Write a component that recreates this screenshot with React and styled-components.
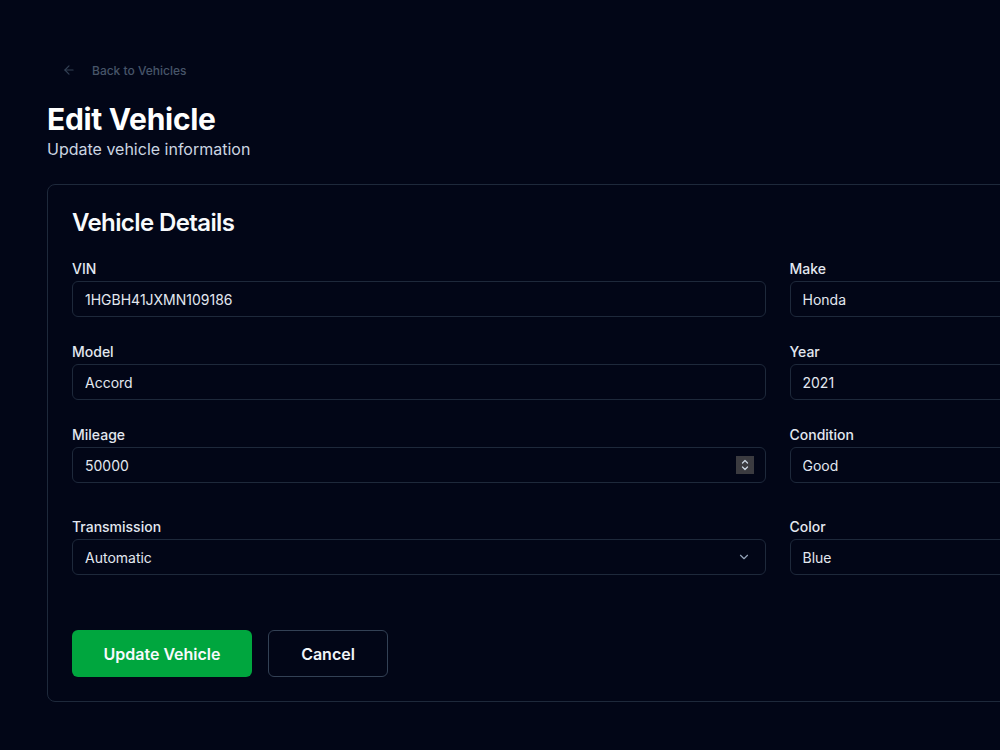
import React from 'react';
import styled, { createGlobalStyle } from "styled-components";

const GlobalStyle = createGlobalStyle`
  html, body {
    margin: 0;
    padding: 0;
    background: #020617;
    overflow: hidden;
  }
  body {
    font-family: Inter, "Noto Sans", sans-serif;
    color: #f8fafc;
  }
  * { box-sizing: border-box; }
`

const fields = [
  [{ label: "VIN", value: "1HGBH41JXMN109186" }, { label: "Make", value: "Honda" }],
  [{ label: "Model", value: "Accord" }, { label: "Year", value: "2021" }],
  [{ label: "Mileage", value: "50000", type: "number" }, { label: "Condition", value: "Good" }],
  [{ label: "Transmission", value: "Automatic", type: "select" }, { label: "Color", value: "Blue" }],
]

const Field = ({ label, value, type }) => (
  <FieldBox>
    <Label>{label}</Label>
    <InputWrap>
      {type === "select" ? (
        <Select defaultValue={value}>
          <option>Automatic</option>
          <option>Manual</option>
        </Select>
      ) : (
        <Input defaultValue={value} type={type === "number" ? "number" : "text"} />
      )}
      {type === "number" && (
        <Spinner>
          <svg width="10" height="14" viewBox="0 0 10 14" fill="none" stroke="#cbd5e1" strokeWidth="1.3" strokeLinecap="round" strokeLinejoin="round">
            <path d="M2.5 5 5 2.5 7.5 5" />
            <path d="M2.5 9 5 11.5 7.5 9" />
          </svg>
        </Spinner>
      )}
      {type === "select" && (
        <Chevron>
          <svg width="14" height="14" viewBox="0 0 24 24" fill="none" stroke="#94a3b8" strokeWidth="2" strokeLinecap="round" strokeLinejoin="round">
            <path d="m6 9 6 6 6-6" />
          </svg>
        </Chevron>
      )}
    </InputWrap>
  </FieldBox>
)

export default function App() {
  return (
    <>
      <GlobalStyle />
      <Page>
        <BackLink>
          <svg width="14" height="14" viewBox="0 0 24 24" fill="none" stroke="currentColor" strokeWidth="2" strokeLinecap="round" strokeLinejoin="round">
            <path d="m12 19-7-7 7-7" />
            <path d="M19 12H5" />
          </svg>
          <span>Back to Vehicles</span>
        </BackLink>
        <Title>Edit Vehicle</Title>
        <Subtitle>Update vehicle information</Subtitle>
        <Card>
          <CardTitle>Vehicle Details</CardTitle>
          <FormGrid>
            {fields.map((row, i) => (
              <Row key={i} $last={i === fields.length - 1}>
                {row.map((f) => (
                  <Field key={f.label} {...f} />
                ))}
              </Row>
            ))}
          </FormGrid>
          <Actions>
            <PrimaryButton>Update Vehicle</PrimaryButton>
            <OutlineButton>Cancel</OutlineButton>
          </Actions>
        </Card>
      </Page>
    </>
  )
}

const Page = styled.div`
  padding: 56px 47px 48px;
  width: 1560px;
`

const BackLink = styled.div`
  display: inline-flex;
  align-items: center;
  gap: 16px;
  height: 28px;
  padding: 0 12px 0 15px;
  margin-bottom: 17px;
  font-size: 12px;
  font-weight: 500;
  color: #475569;

  svg {
    color: #334155;
  }
`

const Title = styled.h1`
  margin: 0;
  font-size: 30px;
  line-height: 36px;
  font-weight: 700;
  letter-spacing: -0.3px;
  color: #ffffff;
`

const Subtitle = styled.p`
  margin: 0 0 23px;
  font-size: 16px;
  line-height: 24px;
  color: #cbd5e1;
`

const Card = styled.section`
  width: 1461px;
  border: 1px solid #1e293b;
  border-radius: 8px;
  padding: 24px;
  background: #020617;
`

const CardTitle = styled.h2`
  margin: 2px 0 24px;
  font-size: 24px;
  line-height: 24px;
  font-weight: 600;
  letter-spacing: -0.6px;
  color: #f8fafc;
`

const FormGrid = styled.div`
  display: flex;
  flex-direction: column;
  gap: 25px;
`

const Row = styled.div`
  display: grid;
  grid-template-columns: 1fr 1fr;
  gap: 24px;
  margin-top: ${(p) => (p.$last ? "9px" : "0")};
`

const FieldBox = styled.div`
  display: flex;
  flex-direction: column;
  gap: 2px;
`

const Label = styled.label`
  font-size: 14px;
  line-height: 20px;
  font-weight: 500;
  color: #e2e8f0;
`

const InputWrap = styled.div`
  position: relative;
`

const Input = styled.input`
  width: 100%;
  height: 36px;
  padding: 0 12px;
  border: 1px solid #1e293b;
  border-radius: 6px;
  background: #020617;
  color: #e2e8f0;
  font-family: Inter, "Noto Sans", sans-serif;
  font-size: 14px;
  outline: none;
  -moz-appearance: textfield;

  &::-webkit-inner-spin-button,
  &::-webkit-outer-spin-button {
    -webkit-appearance: none;
    margin: 0;
  }
`

const Select = styled.select`
  width: 100%;
  height: 36px;
  padding: 0 12px;
  border: 1px solid #1e293b;
  border-radius: 6px;
  background: #020617;
  color: #e2e8f0;
  font-family: Inter, "Noto Sans", sans-serif;
  font-size: 14px;
  appearance: none;
  outline: none;
`

const Spinner = styled.div`
  position: absolute;
  top: 9px;
  right: 12px;
  width: 18px;
  height: 18px;
  background: #3b3b40;
  display: flex;
  align-items: center;
  justify-content: center;
`

const Chevron = styled.div`
  position: absolute;
  top: 11px;
  right: 15px;
  display: flex;
  pointer-events: none;
`

const Actions = styled.div`
  display: flex;
  gap: 16px;
  margin-top: 55px;
`

const PrimaryButton = styled.button`
  height: 47px;
  width: 180px;
  border: none;
  border-radius: 6px;
  background: #00a63e;
  color: #f8fafc;
  font-family: Inter, "Noto Sans", sans-serif;
  font-size: 16px;
  font-weight: 600;
`

const OutlineButton = styled.button`
  height: 47px;
  width: 120px;
  border: 1px solid #334155;
  border-radius: 6px;
  background: #020617;
  color: #f1f5f9;
  font-family: Inter, "Noto Sans", sans-serif;
  font-size: 16px;
  font-weight: 600;
`
